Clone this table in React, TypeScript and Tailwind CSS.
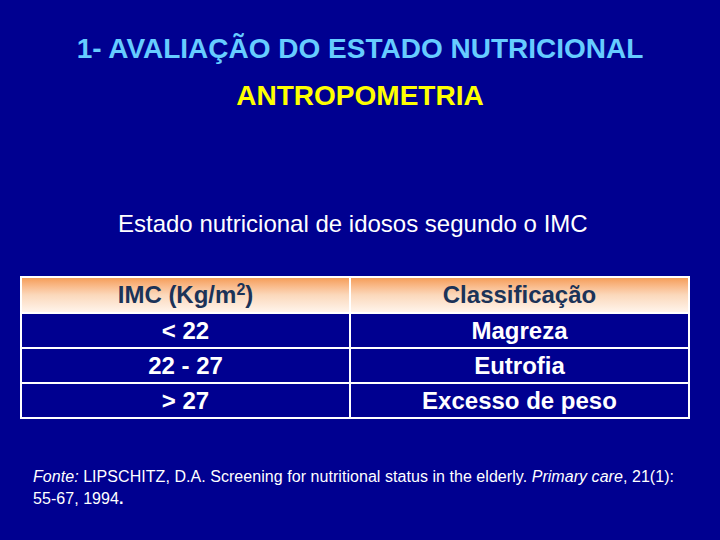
const rows = [
  ["< 22", "Magreza"],
  ["22 - 27", "Eutrofia"],
  ["> 27", "Excesso de peso"],
];

export default function App() {
  return (
    <div
      className="w-[720px] h-[540px] bg-[#000090] overflow-hidden flex flex-col"
      style={{ fontFamily: '"Liberation Sans", Arial, sans-serif' }}
    >
      <h1 className="mt-[33px] text-center text-[28px] leading-[32px] font-bold text-[#66ccff]">
        1- AVALIAÇÃO DO ESTADO NUTRICIONAL
      </h1>
      <h2 className="mt-[15px] text-center text-[28px] leading-[32px] font-bold text-[#ffff00]">
        ANTROPOMETRIA
      </h2>
      <p className="mt-[98px] pl-[118px] text-[24px] leading-[28px] text-white">
        Estado nutricional de idosos segundo o IMC
      </p>

      <div className="mt-[38px] ml-[20px] w-[670px]">
        <table className="w-full border-collapse border-2 border-white text-[24px] leading-[28px] font-bold">
          <thead>
            <tr className="h-[36px] bg-gradient-to-b from-[#f59a52] via-[#fbd8bb] to-[#fff6ee] text-[#1b3358]">
              <th className="w-[329px] border-2 border-white font-bold">
                IMC (Kg/m<sup className="text-[16px]">2</sup>)
              </th>
              <th className="border-2 border-white font-bold">Classificação</th>
            </tr>
          </thead>
          <tbody>
            {rows.map(([a, b]) => (
              <tr key={a} className="h-[35px] text-white">
                <td className="border-2 border-white text-center">{a}</td>
                <td className="border-2 border-white text-center">{b}</td>
              </tr>
            ))}
          </tbody>
        </table>
      </div>

      <p className="mt-[47px] pl-[33px] text-[16px] leading-[22px] text-white tracking-[0.05px] whitespace-nowrap">
        <i>Fonte:</i> LIPSCHITZ, D.A. Screening for nutritional status in the elderly. <i>Primary care</i>, 21(1):
        <br />
        55-67, 1994<span className="font-bold">.</span>
      </p>
    </div>
  );
}
